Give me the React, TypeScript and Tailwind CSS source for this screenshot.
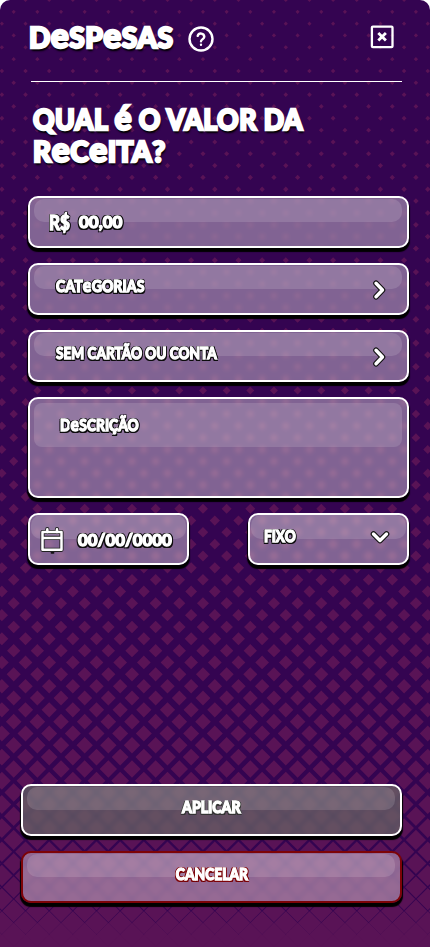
import { Fragment, ReactNode, useMemo } from "react";
import clsx from "clsx";

const STEP = 11.83;

// [y, half diagonal] stops, the diamonds grow towards the bottom
const SIZES = [
  [0, 2],
  [190, 2.7],
  [310, 3.3],
  [414, 4.2],
  [508, 5],
  [627, 6.3],
  [757, 8.4],
  [790, 9.2],
  [850, 10.3],
  [910, 11.3],
  [935, 11.9],
];

function diamondSize(y: number) {
  for (let i = 1; i < SIZES.length; i++) {
    const [y0, s0] = SIZES[i - 1];
    const [y1, s1] = SIZES[i];
    if (y <= y1) return s0 + ((s1 - s0) * (y - y0)) / (y1 - y0);
  }
  return 11.9;
}

function Backdrop() {
  const path = useMemo(() => {
    let d = "";
    for (let row = 0; row < 80; row++) {
      const y = row * STEP;
      const s = diamondSize(y);
      const start = row % 2 ? 13.7 : 1.87;
      for (let x = start - STEP * 2; x < 450; x += STEP * 2) {
        d += `M${x.toFixed(2)} ${(y - s).toFixed(2)}l${s} ${s}l${-s} ${s}l${-s} ${-s}z`;
      }
    }
    return d;
  }, []);

  return (
    <svg className="absolute inset-0" width="430" height="947" viewBox="0 0 430 947">
      <rect width="430" height="947" fill="#340451" />
      <rect y="935" width="430" height="12" fill="#591356" />
      <path d={path} fill="#591356" />
    </svg>
  );
}

interface LabelProps {
  text: string;
  className?: string;
}

// The lowercase "e" is drawn as tall as the capitals
function Label({ text, className }: LabelProps) {
  return (
    <span className={clsx("inline-block origin-left whitespace-nowrap", className)}>
      {text.split(/([eé])/).map((part, i) =>
        part === "e" || part === "é" ? (
          <span key={i} className="text-[1.2em] leading-[0]">
            {part}
          </span>
        ) : (
          <Fragment key={i}>{part}</Fragment>
        )
      )}
    </span>
  );
}

const TITLE = "text-[28px] leading-8 tracking-[0.5px] [-webkit-text-stroke:2.4px_#fff] [text-shadow:1px_3px_2px_#000,0_2px_1px_#000]";
const FAT = "leading-5 [-webkit-text-stroke:1.3px_#fff]";
const OUTLINE =
  "[text-shadow:1.6px_0_#0c0c0c,-1.6px_0_#0c0c0c,0_-1.4px_#0c0c0c,1.3px_-1px_#0c0c0c,-1.3px_-1px_#0c0c0c,1.5px_1.5px_#0c0c0c,-1.5px_1.5px_#0c0c0c,0_2.4px_#0c0c0c]";

interface PanelProps {
  className?: string;
  shine?: string;
  children?: ReactNode;
}

function Panel({ className, shine, children }: PanelProps) {
  return (
    <div
      className={clsx(
        "relative flex h-[52px] items-center rounded-[10px] border-2 shadow-[0_3px_1px_1px_#000] backdrop-blur-[2px]",
        className
      )}
    >
      <div className={clsx("absolute bg-white/13", shine || "left-1 right-[5px] top-px h-[23px] rounded-[10px]")} />
      {children}
    </div>
  );
}

function Chevron({ down, className }: { down?: boolean; className: string }) {
  const d = down ? "M3.5 7l6.5 6.5 6.5-6.5" : "M7 3.3l6.5 6.7-6.5 6.7";
  return (
    <svg className={clsx("absolute", className)} width="20" height="20" fill="none" strokeLinecap="round" strokeLinejoin="round">
      <path d={d} stroke="#111" strokeWidth="5.6" />
      <path d={d} stroke="#fff" strokeWidth="3.4" />
    </svg>
  );
}

function CalendarIcon() {
  const d = "M2.5 7h19v17.8h-19zM2.5 12.9h19M7.3 4.2v3M17 4.2v3";
  return (
    <svg className="absolute left-[10px] top-[10px]" width="26" height="30" fill="none" strokeLinecap="round" strokeLinejoin="round">
      <path d={d} stroke="#222" strokeWidth="4.2" />
      <path d={d} stroke="#fff" strokeWidth="2.5" />
      <path d="M11.5 27.8h2" stroke="#111" strokeWidth="1.8" />
    </svg>
  );
}

export default function App() {
  return (
    <div className="h-[947px] w-[430px] bg-white">
      <main className="relative h-full w-full overflow-hidden rounded-t-[10px] font-['Lato',sans-serif] font-black text-white">
        <Backdrop />

        <div className="relative flex h-full flex-col">
          <header className="ml-[31px] mr-7 flex h-[82px] items-start border-b border-white pt-[21px]">
            <h1 className="-ml-[2px] w-[159px]">
              <Label text="DeSPeSAS" className={TITLE} />
            </h1>
            <svg className="mt-[5px]" width="26" height="26" fill="none" stroke="#fff" strokeWidth="2.4" strokeLinecap="round" strokeLinejoin="round">
              <circle cx="13" cy="13" r="11.5" />
              <path d="M9.7 9.8a3.4 3.4 0 0 1 6.6 1c0 2.2-3.3 2.8-3.3 4.4M13 18.7v.1" />
            </svg>
            <svg className="ml-auto mr-2 mt-1" width="24" height="24" fill="none" stroke="#fff" strokeWidth="2.3">
              <rect x="1.9" y="1.6" width="20.6" height="20.6" rx="1" />
              <path d="M8.3 8l7.6 7.6M15.9 8l-7.6 7.6" strokeWidth="2.8" />
            </svg>
          </header>

          <h2 className="ml-[33px] mt-[21px] flex flex-col">
            <Label text="QUAL é O VALOR DA" className={clsx(TITLE, "h-8 scale-x-[.95]")} />
            <Label text="ReCeITA?" className={clsx(TITLE, "h-8")} />
          </h2>

          <div className="ml-7 mt-[29px] flex w-[381px] flex-col gap-[15px]">
            <Panel className="border-white bg-white/38">
              <Label text="R$" className={clsx(FAT, OUTLINE, "ml-[19px] w-[30px] scale-x-[.85] text-xl")} />
              <Label text="00,00" className={clsx(FAT, OUTLINE, "text-base scale-x-[1.06]")} />
            </Panel>
            <Panel className="border-white bg-white/38">
              <Label text="CATeGORIAS" className={clsx(FAT, OUTLINE, "ml-[26px] -mt-1.5 scale-x-[.88] text-base")} />
              <Chevron className="left-[339px] top-[15px]" />
            </Panel>
            <Panel className="border-white bg-white/38">
              <Label text="SEM CARTÃO OU CONTA" className={clsx(FAT, OUTLINE, "ml-[26px] -mt-1.5 scale-x-[.85] text-base")} />
              <Chevron className="left-[339px] top-[15px]" />
            </Panel>
            <Panel className="h-[101px]! items-start! border-white bg-white/38" shine="left-1 right-[5px] top-1 h-11 rounded-lg">
              <Label text="DeSCRIÇÃO" className={clsx(FAT, OUTLINE, "ml-[30px] mt-4 scale-x-[.86] text-base")} />
            </Panel>
            <div className="flex justify-between">
              <Panel className="w-[161px] border-white bg-white/38" shine="inset-x-px top-0 h-6 rounded-[10px]">
                <CalendarIcon />
                <Label text="00/00/0000" className={clsx(FAT, OUTLINE, "ml-12 mt-px scale-x-[1.05] text-base")} />
              </Panel>
              <Panel className="w-[161px] border-white bg-white/38" shine="inset-x-px top-0 h-6 rounded-[10px]">
                <Label text="FIXO" className={clsx(FAT, OUTLINE, "ml-[14px] -mt-1.5 scale-x-[.85] text-base")} />
                <Chevron down className="left-[120px] top-[12px]" />
              </Panel>
            </div>
          </div>

          <div className="mb-11 ml-[21px] mt-auto flex w-[381px] flex-col gap-[15px]">
            <Panel className="justify-center border-white bg-[#6c7869]/60">
              <Label
                text="APLICAR"
                className={clsx(FAT, "-mt-1.5 origin-center! scale-x-[.88] text-base [text-shadow:1.6px_0_#3d423d,-1.6px_0_#3d423d,0_-1.4px_#3d423d,1.5px_1.5px_#333,-1.5px_1.5px_#333,0_2.4px_#333]")}
              />
            </Panel>
            <Panel className="justify-center border-[#7d0307] bg-white/37">
              <Label
                text="CANCELAR"
                className={clsx(FAT, "-mt-1.5 origin-center! scale-x-[.86] text-base [text-shadow:1.6px_0_#7d0307,-1.6px_0_#7d0307,0_-1.5px_#7d0307,1.3px_-1px_#7d0307,-1.3px_-1px_#7d0307,1.5px_1.5px_#7d0307,-1.5px_1.5px_#7d0307,0_2.4px_#5a0003]")}
              />
            </Panel>
          </div>
        </div>
      </main>
    </div>
  );
}
